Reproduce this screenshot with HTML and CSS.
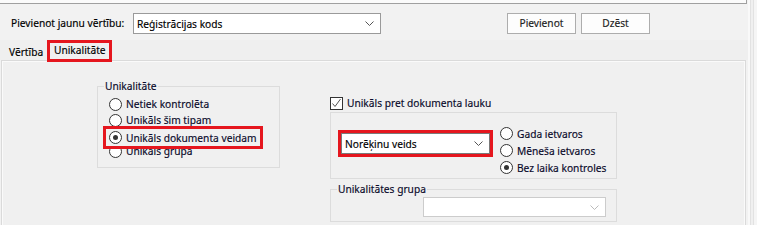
FILE: index.html
```html
<!DOCTYPE html>
<html>
<head>
<meta charset="utf-8">
<link rel="stylesheet" href="styles.css">
</head>
<body>
<div class="window">
  <div class="main">
    <div class="topbox"></div>
    <div class="toolbar">
      <span class="lbl">Pievienot jaunu vērtību:</span>
      <div class="combo combo-top"><span class="ctext">Reģistrācijas kods</span><svg class="chev" width="9" height="5" viewBox="0 0 9 5"><polyline points="0.5,0.5 4.5,4.5 8.5,0.5" fill="none" stroke="#555" stroke-width="1"/></svg></div>
      <div class="btns">
        <div class="btn">Pievienot</div>
        <div class="btn">Dzēst</div>
      </div>
    </div>
    <div class="tabs">
      <div class="tab">Vērtība</div>
      <div class="tab active">Unikalitāte</div>
    </div>
    <div class="panel">
      <div class="col-left">
        <div class="group g1">
          <div class="legend">Unikalitāte</div>
          <div class="radio r1"><span class="rb"></span><span class="rt">Netiek kontrolēta</span></div>
          <div class="radio r2"><span class="rb"></span><span class="rt">Unikāls šim tipam</span></div>
          <div class="radio r3 hl"><span class="rb on"></span><span class="rt">Unikāls dokumenta veidam</span></div>
          <div class="radio r4"><span class="rb"></span><span class="rt">Unikāls grupa</span></div>
        </div>
      </div>
      <div class="col-right">
        <div class="check"><span class="cb"><svg width="11" height="11" viewBox="0 0 11 11"><polyline points="1.5,5.5 4,8.5 9.5,1" fill="none" stroke="#555" stroke-width="1"/></svg></span><span class="rt">Unikāls pret dokumenta lauku</span></div>
        <div class="group g2">
          <div class="hlbox"><div class="combo combo-mid"><span class="ctext">Norēķinu veids</span><svg class="chev" width="9" height="5" viewBox="0 0 9 5"><polyline points="0.5,0.5 4.5,4.5 8.5,0.5" fill="none" stroke="#555" stroke-width="1"/></svg></div></div>
          <div class="radios2">
            <div class="radio"><span class="rb"></span><span class="rt">Gada ietvaros</span></div>
            <div class="radio"><span class="rb"></span><span class="rt">Mēneša ietvaros</span></div>
            <div class="radio"><span class="rb on"></span><span class="rt">Bez laika kontroles</span></div>
          </div>
        </div>
        <div class="group g3">
          <div class="legend">Unikalitātes grupa</div>
          <div class="combo combo-dis"><span class="ctext"></span><svg class="chev" width="9" height="5" viewBox="0 0 9 5"><polyline points="0.5,0.5 4.5,4.5 8.5,0.5" fill="none" stroke="#bbb" stroke-width="1"/></svg></div>
        </div>
      </div>
    </div>
  </div>
  <div class="vscroll"></div>
</div>
</body>
</html>
```

FILE: styles.css
```css
* { box-sizing: border-box; }
html, body { margin: 0; padding: 0; }
body {
  background: #f0f0f0;
  font-family: "Noto Sans", "Liberation Sans", sans-serif;
  font-size: 10.2px;
  color: #000;
  -webkit-text-stroke: 0.15px currentColor;
  overflow: hidden;
}
.window {
  display: flex;
  width: 757px;
  height: 225px;
  overflow: hidden;
}
.main {
  width: 748px;
  flex: none;
  background: #f2f2f2;
}
.topbox {
  width: 747px;
  height: 4px;
  background: #fbfbfb;
  border-bottom: 1px solid #a0a0a0;
  border-right: 1px solid #a0a0a0;
}
.toolbar {
  display: flex;
  align-items: flex-start;
  height: 36px;
  padding-top: 9px;
}
.lbl {
  width: 122px;
  margin-left: 11px;
  line-height: 21px;
  white-space: nowrap;
  color: #000;
}
.combo {
  display: flex;
  align-items: center;
  justify-content: space-between;
  background: #fff;
  border: 1px solid #9a9a9a;
  padding: 0 6px 0 3px;
}
.combo-top { width: 248px; height: 21px; }
.ctext { white-space: nowrap; color: #000; }
.chev { flex: none; }
.btns { display: flex; gap: 5px; margin-left: 126px; }
.btn {
  width: 69px;
  height: 21px;
  line-height: 19px;
  text-align: center;
  background: #fdfdfd;
  border: 1px solid #adadad;
  color: #222;
}
.tabs {
  display: flex;
  align-items: flex-end;
  height: 20px;
  padding-left: 2px;
  background: #efefef;
}
.tab {
  height: 18px;
  line-height: 20px;
  padding-left: 7px;
  width: 45px;
  color: #000;
}
.tab.active {
  position: relative;
  z-index: 2;
  width: 65px;
  height: 22px;
  margin-bottom: -2px;
  border: 3px solid #e5161e;
  background: #f0f0f0;
  padding-left: 4px;
  line-height: 15px;
}
.panel {
  display: flex;
  margin-left: 1px;
  width: 745px;
  height: 170px;
  border: 1px solid #dadada;
  box-shadow: inset 1px 1px 0 #fafafa, inset -1px 0 0 #fafafa;
  background: #f0f0f0;
  padding-left: 95px;
}
.col-left { width: 183px; padding-top: 25px; flex: none; }
.col-right { width: 287px; margin-left: 50px; padding-top: 34px; flex: none; }
.group {
  border: 1px solid #dcdcdc;
}
.legend {
  display: table;
  margin-top: -8px;
  margin-left: 6px;
  padding: 0 1px;
  line-height: 14px;
  background: #f0f0f0;
  color: #0a0a2a;
}
.g1 { height: 82px; }
.radio {
  display: flex;
  align-items: center;
  height: 16px;
  color: #0a0a2a;
  white-space: nowrap;
}
.rb {
  flex: none;
  width: 13px;
  height: 13px;
  border: 1px solid #333;
  border-radius: 50%;
  background: #fff;
  display: flex;
  align-items: center;
  justify-content: center;
  margin-right: 4px;
}
.rb.on::after {
  content: "";
  width: 5px;
  height: 5px;
  border-radius: 50%;
  background: #333;
}
.g1 .radio { padding-left: 11px; }
.g1 .r1 { margin-top: 3px; }
.g1 .r3 {
  position: relative;
  z-index: 1;
  width: 160px;
  height: 23px;
  margin: -2px 0 -6px 5px;
  border: 3px solid #e5161e;
  background: #f0f0f0;
  padding-left: 3px;
}
.check {
  display: flex;
  align-items: center;
  height: 16px;
  color: #0a0a2a;
  white-space: nowrap;
}
.cb {
  width: 13px;
  height: 13px;
  border: 1px solid #333;
  background: #fff;
  margin-right: 4px;
  display: flex;
  align-items: center;
  justify-content: center;
}
.g2 {
  display: flex;
  height: 67px;
  margin-top: 1px;
}
.hlbox {
  width: 155px;
  height: 27px;
  margin: 17px 0 0 7px;
  border: 3px solid #e5161e;
}
.combo-mid { width: 149px; height: 21px; border-color: #7a7a7a; }
.radios2 { margin: 12px 0 0 7px; }
.radios2 .radio { height: 17px; }
.g3 {
  height: 33px;
  margin-top: 10px;
}
.combo-dis {
  width: 183px;
  height: 20px;
  margin: 1px 0 0 92px;
  border-color: #cccccc;
}
.vscroll {
  width: 9px;
  flex: none;
  background: linear-gradient(to right, #f9f9f9 0 2px, #e2e2e2 2px 3px, #f0f0f0 3px 5px, #e2e2e2 5px 6px, #f5f5f5 6px);
}
```
